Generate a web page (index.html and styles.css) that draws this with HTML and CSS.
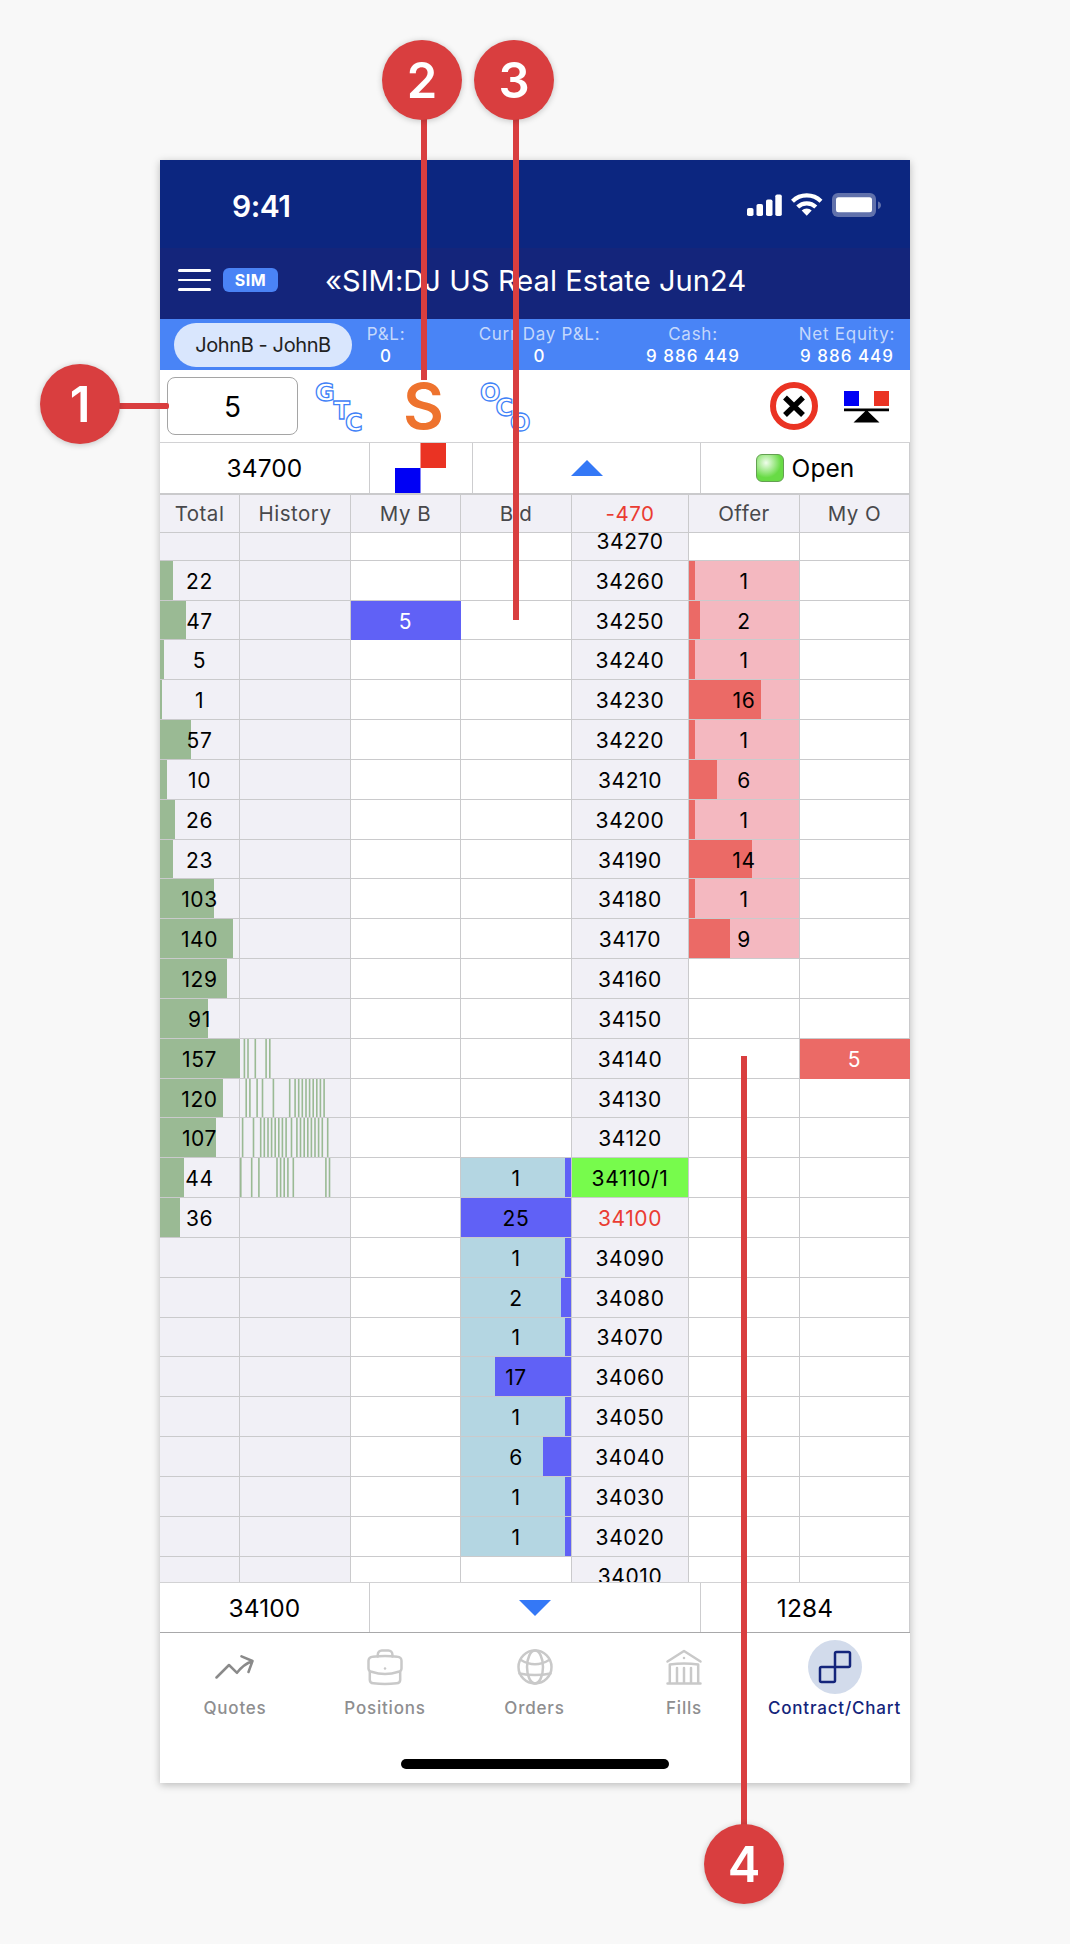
FILE: index.html
```html
<!DOCTYPE html>
<html lang="en">
<head>
    <meta charset="UTF-8">
    <meta name="viewport" content="width=device-width, initial-scale=1.0">
    <title>Contract/Chart</title>
    <link rel="stylesheet" href="styles.css">
</head>
<body>
    <div class="phone">
        <!-- status bar -->
        <div class="status-bar">
            <span class="clock">9:41</span>
            <svg class="status-icons" width="136" height="26" viewBox="0 0 136 26">
                <g fill="#fff">
                    <rect x="0" y="15" width="6.5" height="8" rx="1.8"/>
                    <rect x="9.5" y="11" width="6.5" height="12" rx="1.8"/>
                    <rect x="19" y="6.5" width="6.5" height="16.5" rx="1.8"/>
                    <rect x="28.3" y="1.5" width="6.5" height="21.5" rx="1.8"/>
                </g>
                <g fill="none" stroke="#fff" stroke-width="4.2">
                    <path d="M45.5 8.2a20.500 20.500 0 0 1 28.5 0"/>
                    <path d="M50.7 14a13 13 0 0 1 18.1 0"/>
                </g>
                <path d="M59.7 22.7l-5-5.200a7.500 7.500 0 0 1 10 0z" fill="#fff"/>
                <rect x="85" y="0" width="44" height="24" rx="6" fill="#6171ab"/>
                <rect x="89" y="4.3" width="36" height="15" rx="2.5" fill="#fff"/>
                <path d="M131 8.500c4 1.200 4 6.300 0 7.500z" fill="#6171ab"/>
            </svg>
        </div>

        <!-- title bar -->
        <div class="title-bar">
            <div class="menu"><i></i><i></i><i></i></div>
            <span class="sim">SIM</span>
            <h1>«SIM:DJ US Real Estate Jun24</h1>
        </div>

        <!-- account -->
        <div class="account">
            <span class="account-name">JohnB - JohnB</span>
            <div class="figure pl"><span>P&amp;L:</span><b>0</b></div>
            <div class="figure day"><span>Curr Day P&amp;L:</span><b>0</b></div>
            <div class="figure cash"><span>Cash:</span><b>9 886 449</b></div>
            <div class="figure equity"><span>Net Equity:</span><b>9 886 449</b></div>
        </div>

        <!-- order tools -->
        <div class="toolbar">
            <div class="qty">5</div>
            <svg class="gtc" width="54" height="54" viewBox="0 0 54 54">
                <g class="outline">
                    <text x="1" y="21.5">G</text>
                    <text x="19.500" y="39.5">T</text>
                    <text x="31" y="51.5">C</text>
                </g>
            </svg>
            <span class="stop">S</span>
            <svg class="oco" width="56" height="54" viewBox="0 0 56 54">
                <g class="outline">
                    <text x="1" y="21.5">O</text>
                    <text x="16.500" y="36.5">C</text>
                    <text x="31" y="52">O</text>
                </g>
            </svg>
            <svg class="cancel" width="48" height="48" viewBox="0 0 48 48">
                <circle cx="24" cy="24" r="21" fill="none" stroke="#ea3323" stroke-width="6"/>
                <path d="M15 15.500l18 17.500M33 15.500l-18 17.500" stroke="#000" stroke-width="5.500"/>
            </svg>
            <svg class="balance" width="46" height="33" viewBox="0 0 46 33">
                <rect width="15" height="15" fill="#0000f5"/>
                <rect x="30" width="15" height="15" fill="#ea3323"/>
                <path d="M0 17.500h45v2.700H0zM22.500 19l13 12.500h-26z"/>
            </svg>
        </div>

        <div class="limits">
            <div class="limit">34700</div>
            <div class="limit swatches">
                <svg width="51" height="50" viewBox="0 0 51 50">
                    <rect x="25.5" width="25.5" height="25" fill="#ea3323"/>
                    <rect y="25" width="25.5" height="25" fill="#0000f5"/>
                </svg>
            </div>
            <div class="limit">
                <svg width="32" height="16" viewBox="0 0 32 16"><path d="M0 16L16 0l16 16z" fill="#3478f6"/></svg>
            </div>
            <div class="limit"><i class="led"></i>Open</div>
        </div>

        <!-- price ladder -->
        <div class="ladder-head">
            <span>Total</span>
            <span>History</span>
            <span>My B</span>
            <span>Bid</span>
            <span class="down">-470</span>
            <span>Offer</span>
            <span>My O</span>
        </div>
        <div class="ladder">
            <div class="ladder-rows" id="rows"></div>
        </div>

        <div class="limits bottom">
            <div class="limit">34100</div>
            <div class="limit">
                <svg width="32" height="16" viewBox="0 0 32 16"><path d="M0 0h32L16 16z" fill="#3478f6"/></svg>
            </div>
            <div class="limit">1284</div>
        </div>

        <!-- tabs -->
        <div class="tabs">
            <div class="tab">
                <span class="tab-icon">
                    <svg width="40" height="40" viewBox="0 0 40 40">
                        <path d="M1.500 30.500L14 18l8 7.800c4.500-6 8.500-9.300 15.500-11.800M26.500 9.300L37.500 14l-4 11"/>
                    </svg>
                </span>
                Quotes
            </div>
            <div class="tab">
                <span class="tab-icon">
                    <svg width="40" height="40" viewBox="0 0 40 40">
                        <path d="M12.800 9.500V7.500a4 4 0 0 1 4-4h6.600a4 4 0 0 1 4 4v2"/>
                        <path d="M7.500 9.700q12.500-1.400 25 0a4 4 0 0 1 4 4v7.800a3.500 3.500 0 0 1-3 3.300q-13.500 4.600-27 0a3.500 3.500 0 0 1-3-3.300v-7.800a4 4 0 0 1 4-4z"/>
                        <path d="M4.800 25v8a3.500 3.500 0 0 0 3.500 3.300q11.700 1.400 23.400 0a3.500 3.500 0 0 0 3.500-3.300v-8"/>
                        <path d="M20 21.500h.01"/>
                    </svg>
                </span>
                Positions
            </div>
            <div class="tab">
                <span class="tab-icon">
                    <svg width="40" height="40" viewBox="0 0 40 40">
                        <circle cx="20" cy="20" r="16.5"/>
                        <ellipse cx="20" cy="20" rx="8" ry="16.5"/>
                        <path d="M5.500 12.800q14.500 9 29 0M4.500 26.500q15.500 3.200 31 0"/>
                    </svg>
                </span>
                Orders
            </div>
            <div class="tab">
                <span class="tab-icon">
                    <svg width="40" height="40" viewBox="0 0 40 40">
                        <path d="M3.500 14.500L20 4l16.500 10.500M3.500 36.500h33M5.800 35V17.500q14.200-2 28.400 0V35M13 21v14M20 21v14M27 21v14M20 11h.01"/>
                    </svg>
                </span>
                Fills
            </div>
            <div class="tab active">
                <span class="tab-icon">
                    <svg width="40" height="40" viewBox="0 0 40 40">
                        <rect x="20" y="5" width="15" height="15" rx="1.5"/>
                        <rect x="5" y="20" width="15" height="15" rx="1.5"/>
                    </svg>
                </span>
                Contract/Chart
            </div>
        </div>
        <div class="home-bar"></div>
    </div>

    <!-- callouts lie over the screen -->
    <div class="line line-1"></div>
    <div class="line line-2"></div>
    <div class="line line-3"></div>
    <div class="line line-4"></div>
    <div class="callout callout-1">1</div>
    <div class="callout callout-2">2</div>
    <div class="callout callout-3">3</div>
    <div class="callout callout-4">4</div>

    <script src="ladder.js"></script>
</body>
</html>
```
FILE: styles.css
```css
body {
    margin: 0;
    height: 1944px;
    position: relative;
    overflow: hidden;
    font-family: Inter, "Liberation Sans", sans-serif;
    background-color: #f8f8f8;
    color: #000;
}

.phone {
    width: 750px;
    height: 1623px;
    margin: 160px 0 0 160px;
    display: flex;
    flex-direction: column;
    background-color: #fff;
    box-shadow: 0 2px 8px rgba(0, 0, 0, 0.25);
}

/* status bar */
.status-bar {
    height: 88px;
    box-sizing: border-box;
    padding: 0 27px 0 72px;
    display: flex;
    justify-content: space-between;
    align-items: center;
    background-color: #0c2680;
    color: #fff;
}
.clock {
    font-size: 30px;
    font-weight: 600;
    letter-spacing: -0.5px;
    margin-top: 4px;
}
.status-icons {
    margin-top: 4px;
}

/* title bar */
.title-bar {
    height: 71px;
    box-sizing: border-box;
    padding-bottom: 7px;
    display: flex;
    align-items: center;
    background-color: #14257b;
    color: #fff;
}
.menu {
    width: 33px;
    margin: 0 12px 0 18px;
    display: flex;
    flex-direction: column;
    gap: 7px;
}
.menu i {
    height: 2.5px;
    border-radius: 2px;
    background-color: #fff;
}
.sim {
    width: 55px;
    height: 24px;
    border-radius: 6px;
    background-color: #4a83f6;
    font-size: 16px;
    font-weight: 700;
    line-height: 24px;
    letter-spacing: 0.6px;
    text-align: center;
}
.title-bar h1 {
    margin: 0 0 0 47px;
    font-size: 29px;
    font-weight: 400;
    letter-spacing: 0.1px;
    white-space: nowrap;
}

/* account */
.account {
    height: 51px;
    display: flex;
    align-items: center;
    background-color: #4984f6;
    color: #fff;
}
.account-name {
    flex-shrink: 0;
    width: 178px;
    height: 44px;
    margin-left: 14px;
    border-radius: 22px;
    background-color: #d9e6fd;
    color: #222;
    font-size: 20px;
    line-height: 44px;
    text-align: center;
    letter-spacing: -0.4px;
}
.figure {
    flex-shrink: 0;
    display: flex;
    flex-direction: column;
    align-items: center;
    font-size: 17px;
    line-height: 22px;
    letter-spacing: 0.75px;
    white-space: nowrap;
}
.figure span {
    color: #c4d8fc;
}
.figure b {
    font-weight: 500;
    letter-spacing: 1px;
}
.pl {
    width: 68px;
}
.day {
    width: 239px;
}
.cash {
    width: 68px;
    margin: 0 0 0 0;
}
.equity {
    flex: 1;
    padding-left: 57px;
}

/* order tools */
.toolbar {
    height: 72px;
    display: flex;
    align-items: center;
}
.qty {
    width: 129px;
    height: 56px;
    margin-left: 7px;
    border: 1px solid #a5a5a5;
    border-radius: 8px;
    font-size: 28px;
    line-height: 58px;
    text-align: center;
}
.gtc {
    margin-left: 16px;
}
.outline {
    font-family: "DejaVu Sans", sans-serif;
    font-size: 24px;
    font-weight: 700;
    fill: #fff;
    stroke: #3f82f7;
    stroke-width: 1.3px;
}
.stop {
    width: 40px;
    margin-left: 35px;
    color: #ee732e;
    font-size: 63px;
    font-weight: 600;
    line-height: 72px;
    text-align: center;
}
.oco {
    margin-left: 36px;
}
.cancel {
    margin-left: auto;
}
.balance {
    margin: 2px 20px 0 26px;
}

.limits {
    height: 51px;
    box-sizing: border-box;
    display: grid;
    grid-template-columns: 210px 103px 228px 209px;
    border-top: 1px solid #d2d2d4;
}
.limits.bottom {
    grid-template-columns: 210px 331px 209px;
    border-bottom: 1px solid #a8a8aa;
}
.limit {
    display: flex;
    justify-content: center;
    align-items: center;
    border-right: 1px solid #cdcdcf;
    font-size: 24.5px;
    letter-spacing: 0.1px;
}
.swatches {
    padding-right: 2px;
}
.led {
    width: 26px;
    height: 26px;
    margin-right: 8px;
    border: 1px solid #64a052;
    border-radius: 6px;
    background: radial-gradient(circle at 35% 30%, #f0fdec 0, #68db45 60%);
}

/* price ladder */
.ladder-head,
.row {
    display: grid;
    grid-template-columns: 80px 111px 110px 111px 117px 111px 110px;
}
.ladder-head {
    height: 40px;
    box-sizing: border-box;
    border-top: 2px solid #cacacc;
    border-bottom: 1px solid #cacacc;
    background-color: #f1f0f6;
    color: #48484b;
    font-size: 20.5px;
    line-height: 38px;
    letter-spacing: 0.5px;
    text-align: center;
}
.ladder-head span {
    border-right: 1px solid #cacacc;
}
.ladder-head .down,
.price.last {
    color: #ea3c32;
}
.ladder {
    height: 1049px;
    overflow: hidden;
}
.ladder-rows {
    margin-top: -12px;
}
.row {
    height: 39.84px;
    grid-template-rows: 39.84px;
}
.cell {
    position: relative;
    display: flex;
    justify-content: center;
    align-items: center;
    border-right: 1px solid #cacacc;
    border-bottom: 1px solid #cacacc;
    font-size: 21px;
    letter-spacing: 0.6px;
}
.cell span {
    position: relative;
    padding-top: 2px;
}
.total,
.history,
.price {
    background-color: #f1f0f6;
}
.bar {
    position: absolute;
    top: 0;
    bottom: 0;
    left: 0;
}
.total .bar {
    background-color: #9aba94;
}
.offer.filled {
    background-color: #f4b8c0;
}
.offer .bar {
    background-color: #eb6a66;
}
.bid.filled {
    background-color: #b4d6e2;
}
.bid .bar {
    left: auto;
    right: 0;
    background-color: #6061f6;
}
.my-b.filled {
    background-color: #6061f6;
    border-color: #6061f6;
    color: #fff;
}
.my-o.filled {
    background-color: #eb6a66;
    border-color: #eb6a66;
    color: #fff;
}
.price.trade {
    background-color: #77fb4c;
}
.ticks {
    width: 110px;
    height: 100%;
    fill: #9aba94;
}

/* tabs */
.tabs {
    display: grid;
    grid-template-columns: 150px 150px 149px 150px 151px;
    padding-top: 7px;
}
.tab {
    display: flex;
    flex-direction: column;
    align-items: center;
    color: #8e8e90;
    font-size: 17px;
    font-weight: 500;
    line-height: 26px;
    letter-spacing: 0.8px;
}
.tab-icon {
    width: 54px;
    height: 54px;
    margin-bottom: 1px;
    border-radius: 50%;
    display: flex;
    justify-content: center;
    align-items: center;
}
.tab svg {
    fill: none;
    stroke: #c9c9c9;
    stroke-width: 2.5px;
    stroke-linecap: round;
    stroke-linejoin: round;
}
.tab:first-child svg {
    stroke: #8a8a8a;
}
.tab.active {
    color: #14257b;
}
.tab.active .tab-icon {
    background-color: #d2dbeb;
}
.tab.active svg {
    stroke: #14257b;
}
.home-bar {
    width: 268px;
    height: 10px;
    margin: auto auto 14px;
    border-radius: 5px;
    background-color: #000;
}

/* callouts */
.callout,
.line {
    position: absolute;
    background-color: #d93e3f;
}
.callout {
    width: 80px;
    height: 80px;
    border-radius: 50%;
    box-shadow: 0 1px 6px rgba(0, 0, 0, 0.22);
    color: #fff;
    font-size: 49px;
    font-weight: 600;
    line-height: 82px;
    text-align: center;
}
.callout-1 {
    left: 40px;
    top: 364px;
}
.callout-2 {
    left: 382px;
    top: 40px;
}
.callout-3 {
    left: 474px;
    top: 40px;
}
.callout-4 {
    left: 704px;
    top: 1824px;
}
.line {
    width: 6px;
}
.line-1 {
    left: 118px;
    top: 403px;
    width: 51px;
    height: 6px;
    border-radius: 2px;
}
.line-2 {
    left: 421px;
    top: 110px;
    height: 270px;
}
.line-3 {
    left: 513px;
    top: 110px;
    height: 510px;
}
.line-4 {
    left: 741px;
    top: 1056px;
    height: 780px;
}
```
FILE: ladder.js
```js
// first price in the list is the top row, each row is 10 lower
const top_price = 34270;
const count = 27;

const totals = {
    34260: 22, 34250: 47, 34240: 5, 34230: 1, 34220: 57, 34210: 10,
    34200: 26, 34190: 23, 34180: 103, 34170: 140, 34160: 129, 34150: 91,
    34140: 157, 34130: 120, 34120: 107, 34110: 44, 34100: 36
};
const offers = {
    34260: 1, 34250: 2, 34240: 1, 34230: 16, 34220: 1,
    34210: 6, 34200: 1, 34190: 14, 34180: 1, 34170: 9
};
const bids = {
    34110: 1, 34100: 25, 34090: 1, 34080: 2, 34070: 1,
    34060: 17, 34050: 1, 34040: 6, 34030: 1, 34020: 1
};
const myBids = { 34250: 5 };
const myOffers = { 34140: 5 };

// time slots in which each price traded
const history = {
    34140: [2, 4, 8, 14, 16],
    34130: [3, 5, 9, 12, 18, 27, 30, 32, 34, 36, 38, 40, 42, 44, 46],
    34120: [1, 7, 11, 13, 15, 17, 19, 21, 23, 25, 28, 31, 33, 35, 37, 39, 41, 43, 45, 48],
    34110: [0, 6, 10, 20, 22, 24, 26, 29, 47, 49]
};

function cell(name, value, barWidth) {
    if (value === undefined) return `<div class="cell ${name}"></div>`;
    const bar = barWidth ? `<i class="bar" style="width:${barWidth}px"></i>` : '';
    return `<div class="cell ${name} filled">${bar}<span>${value}</span></div>`;
}

function ticks(slots) {
    if (!slots) return '<div class="cell history"></div>';
    const rects = slots.map(s => `<rect x="${(s * 1.81).toFixed(1)}" width="1.6" height="40"/>`).join('');
    return `<div class="cell history"><svg class="ticks">${rects}</svg></div>`;
}

let html = '';
for (let i = 0; i < count; i++) {
    const p = top_price - i * 10;
    const state = p === 34110 ? ' trade' : p === 34100 ? ' last' : '';
    html += '<div class="row">'
        + cell('total', totals[p], Math.min(80, 1.6 + totals[p] * 0.51))
        + ticks(history[p])
        + cell('my-b', myBids[p])
        + cell('bid', bids[p], Math.min(110, 1.7 + bids[p] * 4.4))
        + cell('price' + state, p === 34110 ? '34110/1' : p)
        + cell('offer', offers[p], Math.min(110, 1.7 + offers[p] * 4.4))
        + cell('my-o', myOffers[p])
        + '</div>';
}
document.getElementById('rows').innerHTML = html;
```
